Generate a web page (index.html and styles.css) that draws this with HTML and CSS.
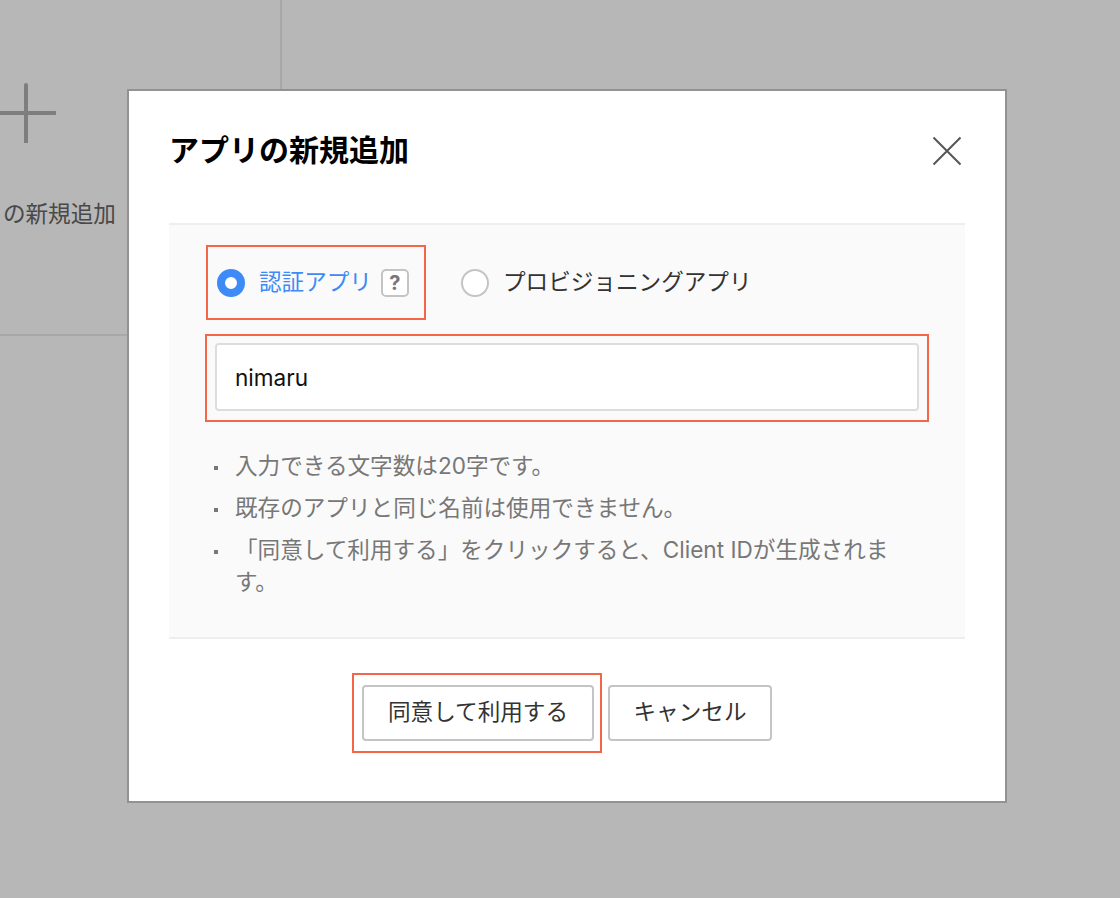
FILE: index.html
```html
<!DOCTYPE html>
<html lang="ja">
<head>
<meta charset="utf-8">
<title>アプリの新規追加</title>
<link rel="stylesheet" href="styles.css">
</head>
<body>
<div class="page">
  <div class="add-card">
    <svg class="plus" width="60" height="60" viewBox="0 0 60 60"><path d="M30 2V60M1 30H59"/></svg>
    <div class="add-label">アプリの新規追加</div>
  </div>
</div>
<div class="overlay">
  <div class="modal">
    <header class="modal-head">
      <h1 class="modal-title">アプリの新規追加</h1>
      <svg class="close" width="30" height="30" viewBox="0 0 30 30"><path d="M1.5 1.5L28.5 28.5M28.5 1.5L1.5 28.5"/></svg>
    </header>
    <section class="panel">
      <div class="type-row">
        <div class="mark mark-radio">
          <span class="radio radio-on"></span>
          <span class="radio-label radio-label-on">認証アプリ</span>
          <span class="help">?</span>
        </div>
        <div class="option">
          <span class="radio"></span>
          <span class="radio-label">プロビジョニングアプリ</span>
        </div>
      </div>
      <div class="mark mark-input">
        <div class="name-input">nimaru</div>
      </div>
      <ul class="notes">
        <li>入力できる文字数は20字です。</li>
        <li>既存のアプリと同じ名前は使用できません。</li>
        <li>「同意して利用する」をクリックすると、Client IDが生成されます。</li>
      </ul>
    </section>
    <footer class="actions">
      <div class="mark mark-btn"><button class="btn btn-agree">同意して利用する</button></div>
      <button class="btn btn-cancel">キャンセル</button>
    </footer>
  </div>
</div>
</body>
</html>
```

FILE: styles.css
```css
* { box-sizing: border-box; }
html, body { margin: 0; padding: 0; height: 100%; overflow: hidden; }
body {
  background: #fff;
  font-family: "Inter", "Noto Sans CJK JP", sans-serif;
  color: #333;
}
.page { height: 898px; overflow: hidden; }
.add-card {
  width: 511px;
  height: 336px;
  margin-left: -229px;
  border-right: 2px solid #ebebeb;
  border-bottom: 2px solid #ebebeb;
  display: flex;
  flex-direction: column;
  align-items: center;
  padding-top: 83px;
}
.plus { display: block; }
.plus path { stroke: #b0b0b0; stroke-width: 4; stroke-linecap: round; fill: none; }
.add-label { margin-top: 55px; font-size: 22.6px; line-height: 32px; color: #666; white-space: nowrap; }

.overlay {
  position: fixed;
  inset: 0;
  background: rgba(0, 0, 0, .283);
  padding: 89px 0 0 127px;
}
.modal {
  width: 880px;
  height: 714px;
  background: #fff;
  border: 2px solid #929292;
  padding: 0 40px;
}
.modal-head {
  height: 132px;
  display: flex;
  align-items: flex-start;
  justify-content: space-between;
  padding: 36px 3px 0 0;
}
.modal-title { margin: 0; font-size: 30px; line-height: 46px; font-weight: 700; color: #000; }
.close { display: block; margin-top: 9px; }
.close path { stroke: #555; stroke-width: 2; fill: none; }

.panel {
  height: 416px;
  background: #fafafa;
  border-top: 2px solid #eee;
  border-bottom: 2px solid #eee;
  padding: 20px 36px 0;
}
.mark { border: 2px solid #f4664a; }
.type-row { display: flex; align-items: center; }
.mark-radio {
  width: 220px;
  height: 75px;
  margin-left: 1px;
  padding-left: 9px;
  display: flex;
  align-items: center;
}
.option { display: flex; align-items: center; margin-left: 35px; }
.radio {
  width: 28px;
  height: 28px;
  border-radius: 50%;
  background: #fff;
  border: 2px solid #c4c4c4;
  flex: none;
}
.radio-on { border: 8px solid #3e8af7; }
.radio-label { margin-left: 14px; padding-bottom: 2px; font-size: 22.6px; line-height: 32px; color: #333; white-space: nowrap; }
.radio-label-on { color: #3e8af7; }
.help {
  width: 28px;
  height: 28px;
  margin-left: 9px;
  border: 2px solid #c4c4c4;
  border-radius: 5px;
  background: #fff;
  color: #777;
  font-size: 20px;
  font-weight: 700;
  line-height: 24px;
  text-align: center;
}
.mark-input {
  width: 724px;
  height: 88px;
  margin-top: 14px;
  padding: 7px 8px;
}
.name-input {
  height: 68px;
  background: #fff;
  border: 2px solid #ddd;
  border-radius: 4px;
  padding: 0 18px;
  font-size: 22.6px;
  line-height: 66px;
  color: #111;
}
.notes {
  list-style: none;
  margin: 28px 0 0;
  padding: 0 20px 0 30px;
  font-size: 22.6px;
  line-height: 32px;
  color: #777;
}
.notes li { position: relative; margin-bottom: 10px; }
.notes li::before {
  content: "";
  position: absolute;
  left: -21px;
  top: 16px;
  width: 4px;
  height: 4px;
  background: #777;
}
.actions {
  display: flex;
  align-items: center;
  padding-top: 34px;
  margin-left: 183px;
}
.mark-btn { width: 250px; height: 80px; padding: 10px 8px; }
.btn {
  height: 56px;
  background: #fff;
  border: 2px solid #c4c4c4;
  border-radius: 4px;
  font: inherit;
  font-size: 22.6px;
  color: #333;
  padding: 0 0 5px;
}
.btn-agree { width: 232px; }
.btn-cancel { width: 164px; margin-left: 6px; }
```
